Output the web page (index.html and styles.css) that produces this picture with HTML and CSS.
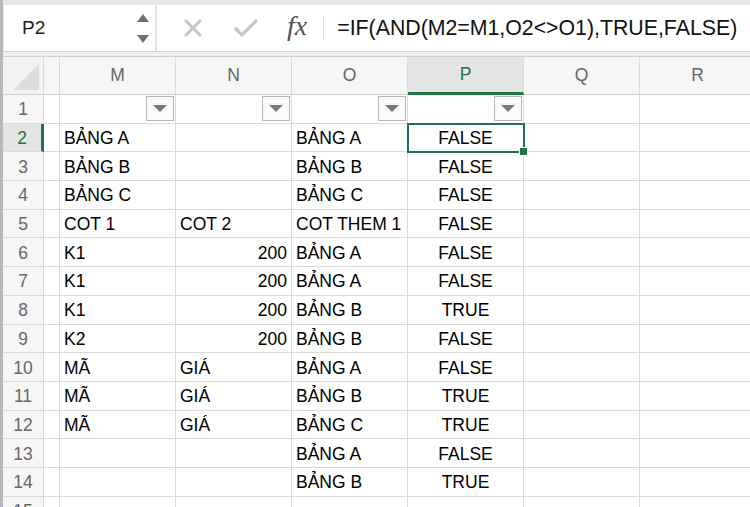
FILE: index.html
```html
<!DOCTYPE html>
<html lang="en">
<head>
    <meta charset="UTF-8">
    <title>Sheet</title>
    <link rel="stylesheet" href="styles.css">
</head>
<body>
    <div class="app">
        <div class="top-band"></div>
        <div class="formula-bar">
            <div class="name-box">
                <span class="name-text">P2</span>
                <div class="spinner">
                    <svg width="12" height="30" viewBox="0 0 12 30">
                        <polygon points="6,0 12,8 0,8" fill="#707070"/>
                        <polygon points="0,21 12,21 6,29" fill="#707070"/>
                    </svg>
                </div>
            </div>
            <div class="formula-area">
                <svg class="icon-x" width="20" height="20" viewBox="0 0 20 20">
                    <path d="M2 2 L18 18 M18 2 L2 18" stroke="#c6c6c6" stroke-width="3" fill="none"/>
                </svg>
                <svg class="icon-check" width="26" height="20" viewBox="0 0 26 20">
                    <path d="M2 10 L9 17 L24 2" stroke="#c6c6c6" stroke-width="3.2" fill="none"/>
                </svg>
                <span class="fx">fx</span>
                <span class="divider"></span>
                <span class="formula-text">=IF(AND(M2=M1,O2&lt;&gt;O1),TRUE,FALSE)</span>
            </div>
        </div>
        <div class="bar-gap"></div>
        <div class="sheet">
            <div class="hdr corner"><span class="corner-tri"></span></div>
            <div class="hdr"></div>
            <div class="hdr">M</div>
            <div class="hdr">N</div>
            <div class="hdr">O</div>
            <div class="hdr hdr-active">P</div>
            <div class="hdr">Q</div>
            <div class="hdr">R</div>

            <div class="rownum">1</div><div class="cell"></div>
            <div class="cell filter"><span class="drop"></span></div>
            <div class="cell filter"><span class="drop"></span></div>
            <div class="cell filter"><span class="drop"></span></div>
            <div class="cell filter p1"><span class="drop"></span></div>
            <div class="cell"></div><div class="cell"></div>

            <div class="rownum row-active">2</div><div class="cell"></div>
            <div class="cell">BẢNG A</div><div class="cell"></div><div class="cell">BẢNG A</div>
            <div class="cell center selected">FALSE<span class="handle"></span></div><div class="cell"></div><div class="cell"></div>

            <div class="rownum">3</div><div class="cell"></div>
            <div class="cell">BẢNG B</div><div class="cell"></div><div class="cell">BẢNG B</div>
            <div class="cell center">FALSE</div><div class="cell"></div><div class="cell"></div>

            <div class="rownum">4</div><div class="cell"></div>
            <div class="cell">BẢNG C</div><div class="cell"></div><div class="cell">BẢNG C</div>
            <div class="cell center">FALSE</div><div class="cell"></div><div class="cell"></div>

            <div class="rownum">5</div><div class="cell"></div>
            <div class="cell">COT 1</div><div class="cell">COT 2</div><div class="cell">COT THEM 1</div>
            <div class="cell center">FALSE</div><div class="cell"></div><div class="cell"></div>

            <div class="rownum">6</div><div class="cell"></div>
            <div class="cell">K1</div><div class="cell right">200</div><div class="cell">BẢNG A</div>
            <div class="cell center">FALSE</div><div class="cell"></div><div class="cell"></div>

            <div class="rownum">7</div><div class="cell"></div>
            <div class="cell">K1</div><div class="cell right">200</div><div class="cell">BẢNG A</div>
            <div class="cell center">FALSE</div><div class="cell"></div><div class="cell"></div>

            <div class="rownum">8</div><div class="cell"></div>
            <div class="cell">K1</div><div class="cell right">200</div><div class="cell">BẢNG B</div>
            <div class="cell center">TRUE</div><div class="cell"></div><div class="cell"></div>

            <div class="rownum">9</div><div class="cell"></div>
            <div class="cell">K2</div><div class="cell right">200</div><div class="cell">BẢNG B</div>
            <div class="cell center">FALSE</div><div class="cell"></div><div class="cell"></div>

            <div class="rownum">10</div><div class="cell"></div>
            <div class="cell">MÃ</div><div class="cell">GIÁ</div><div class="cell">BẢNG A</div>
            <div class="cell center">FALSE</div><div class="cell"></div><div class="cell"></div>

            <div class="rownum">11</div><div class="cell"></div>
            <div class="cell">MÃ</div><div class="cell">GIÁ</div><div class="cell">BẢNG B</div>
            <div class="cell center">TRUE</div><div class="cell"></div><div class="cell"></div>

            <div class="rownum">12</div><div class="cell"></div>
            <div class="cell">MÃ</div><div class="cell">GIÁ</div><div class="cell">BẢNG C</div>
            <div class="cell center">TRUE</div><div class="cell"></div><div class="cell"></div>

            <div class="rownum">13</div><div class="cell"></div>
            <div class="cell"></div><div class="cell"></div><div class="cell">BẢNG A</div>
            <div class="cell center">FALSE</div><div class="cell"></div><div class="cell"></div>

            <div class="rownum">14</div><div class="cell"></div>
            <div class="cell"></div><div class="cell"></div><div class="cell">BẢNG B</div>
            <div class="cell center">TRUE</div><div class="cell"></div><div class="cell"></div>

            <div class="rownum">15</div><div class="cell"></div>
            <div class="cell"></div><div class="cell"></div><div class="cell"></div>
            <div class="cell"></div><div class="cell"></div><div class="cell"></div>
        </div>
    </div>
</body>
</html>
```

FILE: styles.css
```css
body {
    margin: 0;
    font-family: "Liberation Sans", Arial, sans-serif;
    background-color: #ffffff;
    overflow: hidden;
}
.app {
    width: 750px;
    height: 507px;
    overflow: hidden;
    border-left: 3px solid #b8b8b8;
    box-sizing: border-box;
}
.top-band {
    height: 5px;
    background-color: #e6e6e6;
}
.formula-bar {
    display: flex;
    height: 46px;
    background-color: #e6e6e6;
    gap: 2px;
}
.name-box {
    width: 151px;
    margin-left: 1px;
    background-color: white;
    display: flex;
    align-items: center;
    justify-content: space-between;
    padding: 0 6px 0 18px;
    box-sizing: border-box;
}
.name-text {
    font-size: 19px;
    color: #222;
}
.spinner {
    display: flex;
    padding-top: 2px;
}
.formula-area {
    flex-grow: 1;
    background-color: white;
    display: flex;
    align-items: center;
    padding-left: 26px;
}
.icon-x {
    margin-right: 30px;
}
.icon-check {
    margin-right: 28px;
}
.fx {
    font-family: "Liberation Serif", "Times New Roman", serif;
    font-style: italic;
    font-size: 28px;
    color: #555;
    margin-top: -4px;
}
.divider {
    width: 1px;
    height: 26px;
    background-color: #dedede;
    margin: 0 13px 0 16px;
}
.formula-text {
    font-size: 21.3px;
    color: #111;
    white-space: nowrap;
}
.bar-gap {
    height: 4px;
    background-color: #f0f0f0;
    border-top: 1px solid #cfcfcf;
    border-bottom: 1px solid #cfcfcf;
}
.sheet {
    display: grid;
    grid-template-columns: 41px 16px repeat(6, 116px);
    grid-template-rows: 38px repeat(15, 28.7px);
    font-size: 17.5px;
}
.hdr {
    background-color: #f6f6f6;
    border-right: 1px solid #dadada;
    border-bottom: 1px solid #cfcfcf;
    display: flex;
    align-items: center;
    justify-content: center;
    color: #676767;
    font-size: 17.5px;
    position: relative;
}
.corner {
    background-color: #f3f3f3;
}
.corner-tri {
    position: absolute;
    right: 4px;
    bottom: 4px;
    width: 0;
    height: 0;
    border-left: 26px solid transparent;
    border-bottom: 26px solid #dcdcdc;
}
.hdr-active {
    background-color: #e4e4e4;
    color: #217346;
    border-bottom: 3px solid #217346;
}
.rownum {
    background-color: #f6f6f6;
    border-right: 1px solid #dadada;
    border-bottom: 1px solid #dadada;
    display: flex;
    align-items: center;
    justify-content: center;
    color: #676767;
    box-sizing: border-box;
    padding-top: 2px;
}
.row-active {
    background-color: #e4e4e4;
    color: #217346;
    border-right: 3px solid #217346;
}
.cell {
    border-right: 1px solid #dadada;
    border-bottom: 1px solid #dadada;
    display: flex;
    align-items: center;
    padding: 2px 4px 0;
    color: #000;
    white-space: nowrap;
    position: relative;
    min-width: 0;
}
.center {
    justify-content: center;
}
.right {
    justify-content: flex-end;
}
.filter {
    justify-content: flex-end;
    padding: 1px 1px 2px 0;
    align-items: stretch;
}
.drop {
    width: 26px;
    border: 1px solid #b6b6b6;
    background-color: #fafafa;
    display: flex;
    align-items: center;
    justify-content: center;
}
.drop::after {
    content: "";
    border-left: 7px solid transparent;
    border-right: 7px solid transparent;
    border-top: 7px solid #7a7a7a;
}
.selected {
    outline: 2px solid #217346;
    outline-offset: -1px;
    z-index: 2;
}
.handle {
    position: absolute;
    right: -5px;
    bottom: -5px;
    width: 7px;
    height: 7px;
    background-color: #217346;
    border: 1px solid white;
}
```
